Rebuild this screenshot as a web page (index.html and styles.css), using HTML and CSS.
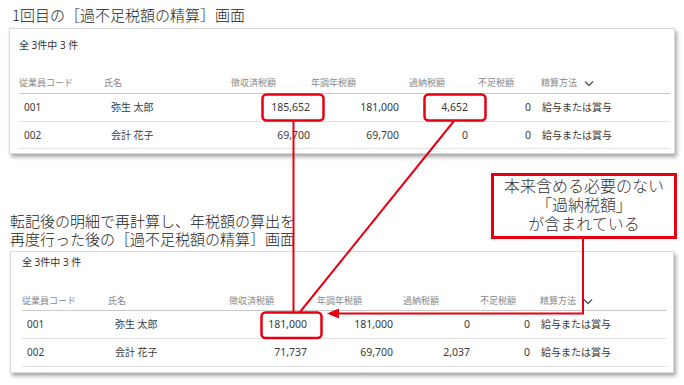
FILE: index.html
```html
<!DOCTYPE html>
<html lang="ja">
<head>
  <meta charset="UTF-8" />
  <meta name="viewport" content="width=device-width, initial-scale=1.0" />
  <title>過不足税額の精算</title>
  <link rel="stylesheet" href="styles.css">
</head>
<body>
  <div class="page">
    <h2 class="title">1回目の［過不足税額の精算］画面</h2>

    <div class="card card-first">
      <div class="count">全 3件中 3 件</div>
      <div class="row head">
        <span>従業員コード</span>
        <span>氏名</span>
        <span>徴収済税額</span>
        <span>年調年税額</span>
        <span>過納税額</span>
        <span>不足税額</span>
        <span>精算方法 <svg class="chev" width="10" height="7" viewBox="0 0 10 7"><polyline points="1,1.5 5,5.5 9,1.5" /></svg></span>
      </div>
      <div class="row">
        <span>001</span>
        <span>弥生 太郎</span>
        <span>185,652</span>
        <span>181,000</span>
        <span>4,652</span>
        <span>0</span>
        <span>給与または賞与</span>
      </div>
      <div class="row">
        <span>002</span>
        <span>会計 花子</span>
        <span>69,700</span>
        <span>69,700</span>
        <span>0</span>
        <span>0</span>
        <span>給与または賞与</span>
      </div>
    </div>

    <h2 class="title title-second"><span class="line">転記後の明細で再計算し、年税額の算出を</span><span class="line">再度行った後の［過不足税額の精算］画面</span></h2>

    <div class="card card-second">
      <div class="count">全 3件中 3 件</div>
      <div class="row head">
        <span>従業員コード</span>
        <span>氏名</span>
        <span>徴収済税額</span>
        <span>年調年税額</span>
        <span>過納税額</span>
        <span>不足税額</span>
        <span>精算方法 <svg class="chev" width="10" height="7" viewBox="0 0 10 7"><polyline points="1,1.5 5,5.5 9,1.5" /></svg></span>
      </div>
      <div class="row">
        <span>001</span>
        <span>弥生 太郎</span>
        <span>181,000</span>
        <span>181,000</span>
        <span>0</span>
        <span>0</span>
        <span>給与または賞与</span>
      </div>
      <div class="row">
        <span>002</span>
        <span>会計 花子</span>
        <span>71,737</span>
        <span>69,700</span>
        <span>2,037</span>
        <span>0</span>
        <span>給与または賞与</span>
      </div>
    </div>
  </div>

  <!-- 注釈（赤枠と矢印） -->
  <svg class="marks" width="684" height="385" viewBox="0 0 684 385">
    <rect x="262.5" y="94.5" width="61" height="26" rx="4" />
    <rect x="424.5" y="94.5" width="61" height="26" rx="4" />
    <rect x="261.5" y="312.5" width="60" height="25.5" rx="4" />
    <line x1="293.5" y1="121" x2="293.5" y2="312" />
    <line x1="454" y1="121" x2="300" y2="312" />
    <polyline points="583,239 583,313.5 336,313.5" />
    <polygon class="head-arrow" points="327,313.5 339,308.5 339,318.5" />
  </svg>

  <div class="callout">
    <span class="line">本来含める必要のない</span>
    <span class="line">「過納税額」</span>
    <span class="line">が含まれている</span>
  </div>
</body>
</html>
```

FILE: styles.css
```css
body {
  margin: 0;
  width: 684px;
  height: 385px;
  overflow: hidden;
  position: relative;
  background: #fff;
  font-family: "Noto Sans", "Noto Sans CJK JP", sans-serif;
  color: #333;
}
.page {
  padding-left: 9px;
}
.title {
  margin: 6px 0 0 3px;
  font-family: "Noto Sans CJK JP", sans-serif;
  font-size: 15px;
  font-weight: 300;
  line-height: 18px;
  color: #222;
}
.title .line {
  display: block;
  height: 18px;
}
.title-second {
  margin-top: 58px;
  margin-left: 1px;
}
.card {
  box-sizing: border-box;
  border: 1px solid #d9d9d9;
  background: #fff;
  box-shadow: 2px 3px 4px rgba(0,0,0,0.35);
}
.card-first {
  width: 666px;
  margin-top: 4px;
  padding: 9px 4px 4px 9px;
}
.card-second {
  width: 664px;
  margin: 3px 0 0 1px;
  padding: 3px 6px 5px 11px;
}
.count {
  font-size: 10px;
  line-height: 14px;
  margin-bottom: 21px;
}
.card-second .count {
  margin-bottom: 23px;
}
.row {
  display: grid;
  border-bottom: 1px solid #e2e2e2;
  font-size: 10px;
  line-height: 27px;
  white-space: nowrap;
  color: #3a3a3a;
}
.card-first .row {
  grid-template-columns: 85px 127px 80px 98px 69px 63px 1fr;
}
.card-second .row {
  grid-template-columns: 86px 121px 88px 86px 77px 60px 1fr;
}
.card-first .row:nth-child(4) {
  line-height: 26px;
}
.row > span:nth-child(1) {
  padding-left: 5px;
}
.row > span:nth-child(2) {
  padding-left: 7px;
}
.row > span:nth-child(n+3):nth-child(-n+6) {
  text-align: right;
  padding-right: 10px;
  font-size: 10.5px;
}
.row > span:nth-child(6) {
  padding-right: 14px;
}
.card-first .row > span:nth-child(3) {
  padding-right: 1px;
}
.row > span:nth-child(7) {
  padding-left: 1px;
}
.row.head {
  border-bottom-color: #c8c8c8;
  font-size: 9px;
  line-height: 20px;
  color: #888;
}
.card-second .row.head {
  line-height: 18px;
}
.row.head > span {
  padding: 0;
  text-align: left;
  font-size: 9px;
}
.row.head > span:nth-child(n+3):nth-child(-n+6) {
  text-align: left;
  padding: 0;
  font-size: 9px;
}
.chev {
  margin-left: 5px;
  vertical-align: middle;
}
.chev polyline {
  fill: none;
  stroke: #555;
  stroke-width: 1.4;
}
.marks {
  position: absolute;
  left: 0;
  top: 0;
  pointer-events: none;
}
.marks rect,
.marks line,
.marks polyline {
  fill: none;
  stroke: #e60012;
  stroke-width: 2;
}
.marks rect {
  stroke-width: 2.5;
}
.marks .head-arrow {
  fill: #e60012;
}
.callout {
  position: absolute;
  left: 491px;
  top: 173px;
  width: 186px;
  height: 66px;
  box-sizing: border-box;
  border: 3px solid #e60012;
  background: #fff;
  text-align: center;
  font-family: "Noto Sans CJK JP", sans-serif;
  font-size: 16px;
  font-weight: 300;
  line-height: 19px;
  color: #333;
}
.callout .line {
  display: block;
  height: 19px;
}
```
